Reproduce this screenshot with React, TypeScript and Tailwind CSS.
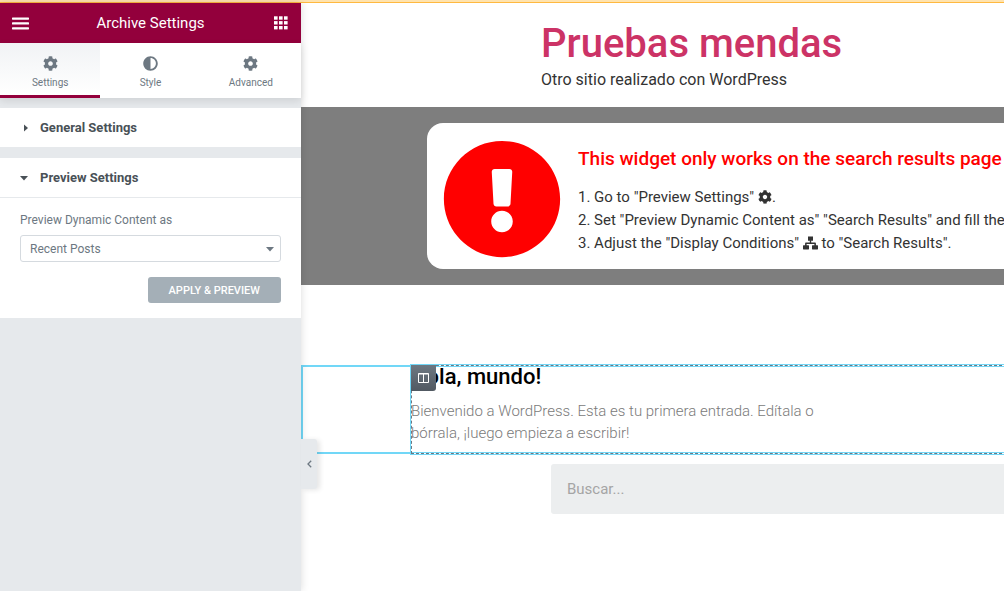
import type { ReactNode } from "react";
import { FaAdjust, FaCog, FaExclamationCircle } from "react-icons/fa";

function MenuIcon() {
  return (
    <svg width="17" height="13" viewBox="0 0 17 13" fill="currentColor" aria-hidden="true">
      <rect y="0.500" width="17" height="2.2" rx="0.6" />
      <rect y="5.300" width="17" height="2.2" rx="0.6" />
      <rect y="10.200" width="17" height="2.2" rx="0.6" />
    </svg>
  );
}

function AppsIcon() {
  return (
    <svg width="14" height="14" viewBox="0 0 14 14" fill="currentColor" aria-hidden="true">
      {[0.3, 5.1, 10].map((y) => [0, 5, 10].map((x) => <rect key={`${x}-${y}`} x={x} y={y} width="3.6" height="3.4" />))}
    </svg>
  );
}

function ColumnsIcon() {
  return (
    <svg width="11" height="10" viewBox="0 0 11 10" fill="none" stroke="currentColor" aria-hidden="true">
      <path d="M.5 .5h10v9H.5zM5.5 .5v9M.5 1h10" />
    </svg>
  );
}

function SitemapIcon() {
  return (
    <svg className="inline align-[-2px]" width="15" height="14" viewBox="0 0 15 14" fill="currentColor" aria-hidden="true">
      <path d="M5 .5h5v4.300H8.200v1.700h3.700c.6 0 1 .4 1 1V9.200h1.600c.3 0 .5.2.5.5v3.300c0 .3-.2.5-.5.500h-5c-.3 0-.5-.2-.5-.5V9.700c0-.3.2-.5.5-.5h1.900V8H3.600v1.200h1.900c.3 0 .5.2.5.5v3.300c0 .3-.2.500-.5.500h-5c-.3 0-.5-.2-.5-.5V9.700c0-.3.2-.5.5-.5h1.600V7.500c0-.6.4-1 1-1h3.700V4.800H5z" />
    </svg>
  );
}

function Caret({ open = false }: { open?: boolean }) {
  return (
    <svg width="8" height="8" viewBox="0 0 8 8" fill="currentColor" aria-hidden="true">
      {open ? <path d="M0 2h8L4 6.500z" /> : <path d="M4 .5v7L8 4z" />}
    </svg>
  );
}

function Tab({ icon, label, active = false }: { icon: ReactNode; label: string; active?: boolean }) {
  return (
    <button
      type="button"
      role="tab"
      aria-selected={active}
      className={
        active
          ? "flex flex-1 flex-col items-center gap-[3px] border-b-3 border-[#93003c] bg-linear-to-b from-[#f1f3f5] to-white pt-3"
          : "flex flex-1 flex-col items-center gap-[3px] border-b-3 border-transparent pt-3"
      }
    >
      <span className="py-px text-[15px] leading-none text-[#6d7882]">{icon}</span>
      <span className="text-[10px] leading-[15px]">{label}</span>
    </button>
  );
}

function Sidebar() {
  return (
    <aside className="relative z-10 flex w-[301px] shrink-0 flex-col bg-[#e6e9ec] text-[#6d7882] shadow-[0_0_8px_rgba(0,0,0,0.15)]">
      <header className="flex h-10 items-center justify-between bg-[#93003c] pr-[13px] pl-3 text-white">
        <button type="button" aria-label="Menu">
          <MenuIcon />
        </button>
        <h1 className="flex-1 pr-[2px] text-center text-[15px]">Archive Settings</h1>
        <button type="button" aria-label="Widgets">
          <AppsIcon />
        </button>
      </header>
      <div role="tablist" className="flex h-[55px] bg-white shadow-[0_3px_8px_rgba(0,0,0,0.1)]">
        <Tab icon={<FaCog />} label="Settings" active />
        <Tab icon={<FaAdjust />} label="Style" />
        <Tab icon={<FaCog />} label="Advanced" />
      </div>
      <section className="mt-[10px] bg-white">
        <button type="button" aria-expanded="false" className="flex h-[39px] w-full items-center gap-3 pl-5 text-[13px] font-bold text-[#495157]">
          <Caret />
          General Settings
        </button>
      </section>
      <section className="mt-[11px] bg-white">
        <button type="button" aria-expanded="true" className="flex h-10 w-full items-center gap-3 border-b border-[#e6e9ec] pl-5 text-[13px] font-bold text-[#495157]">
          <Caret open />
          Preview Settings
        </button>
        <div className="flex flex-col px-5 pt-[14px] pb-[15px]">
          <label htmlFor="preview-as" className="text-xs">
            Preview Dynamic Content as
          </label>
          <div className="relative mt-[7px]">
            <select
              id="preview-as"
              className="h-[27px] w-full appearance-none rounded-[3px] border border-[#d5dadf] bg-white px-[9px] text-xs text-[#6d7882]"
            >
              <option>Recent Posts</option>
            </select>
            <span className="pointer-events-none absolute inset-y-0 right-[7px] flex items-center">
              <Caret open />
            </span>
          </div>
          <button type="button" className="mt-[15px] h-[26px] self-end rounded-[3px] bg-[#a4afb7] px-[21px] pt-[3px] text-[11px] font-medium text-white uppercase">
            Apply &amp; Preview
          </button>
        </div>
      </section>
      <button
        type="button"
        aria-label="Hide panel"
        className="absolute top-[436px] left-full flex h-[50px] w-4 items-center justify-center rounded-r-[3px] bg-[#e6e9ec] shadow-[3px_1px_5px_rgba(0,0,0,0.1)]"
      >
        <svg width="5" height="8" viewBox="0 0 5 8" fill="none" stroke="currentColor" strokeWidth="1.3" aria-hidden="true">
          <path d="M4.200 .8 1 4l3.200 3.200" />
        </svg>
      </button>
    </aside>
  );
}

function Notice() {
  return (
    <section className="bg-[#7e7e7e] py-4 pl-[126px]">
      <div className="flex gap-4 rounded-l-2xl bg-white pt-4 pb-[10px] pl-[15px]">
        <FaExclamationCircle className="size-[120px] shrink-0 text-[#ff0000]" />
        <div className="pt-2 whitespace-nowrap">
          <h2 className="text-[19px] leading-6 font-medium text-[#ff0000]">This widget only works on the search results page</h2>
          <ol className="mt-[15px] text-[15px] leading-[23px] text-[#333]">
            <li>
              1. Go to "Preview Settings" <FaCog className="inline size-[14px] align-[-2px]" />.
            </li>
            <li>2. Set "Preview Dynamic Content as" "Search Results" and fill the</li>
            <li>
              3. Adjust the "Display Conditions" <SitemapIcon /> to "Search Results".
            </li>
          </ol>
        </div>
      </div>
    </section>
  );
}

function PostColumn() {
  return (
    <section className="mt-20 flex border-y-2 border-l-2 border-[#71d7f7]">
      <article className="relative -my-[2px] -mr-2 ml-[108px] h-[89px] flex-1 bg-white">
        <div className="pointer-events-none absolute inset-0 border border-dashed border-[#6d7882] shadow-[inset_0_1px_0_#71d7f7,inset_0_-1px_0_#71d7f7] outline outline-[#71d7f7]" />
        <h2 className="text-[22px] leading-6 font-medium text-black">Hola, mundo!</h2>
        <p className="mt-[11px] max-w-[430px] text-[15px] leading-[22px] font-light text-[#7a7a7a]">
          Bienvenido a WordPress. Esta es tu primera entrada. Edítala o bórrala, ¡luego empieza a escribir!
        </p>
        <button
          type="button"
          aria-label="Edit column"
          className="absolute top-0 left-0 flex h-[26px] w-[25px] items-center justify-center rounded-br-[3px] bg-linear-to-b from-[#6d7882] to-[#515962] text-white"
        >
          <ColumnsIcon />
        </button>
      </article>
    </section>
  );
}

export default function App() {
  return (
    <div className="flex min-h-screen flex-col bg-white font-[Roboto,sans-serif]">
      <div className="h-[3px] border-b border-[#ffb940] bg-[#ffe3ae]" />
      <div className="flex flex-1">
        <Sidebar />
        <main className="min-w-0 flex-1 overflow-hidden">
          <header className="h-[104px] pt-4 pl-[240px]">
            <h1 className="text-[40px] leading-[49px] font-medium text-[#cc3366]">Pruebas mendas</h1>
            <p className="text-base text-[#333]">Otro sitio realizado con WordPress</p>
          </header>
          <Notice />
          <PostColumn />
          <form className="mt-[10px] pl-[250px]">
            <input
              type="search"
              aria-label="Buscar"
              placeholder="Buscar..."
              className="h-[50px] w-full rounded-l-[3px] bg-[#eceeef] px-4 text-[15px] placeholder:text-[#a5a5a5]"
            />
          </form>
        </main>
      </div>
    </div>
  );
}
